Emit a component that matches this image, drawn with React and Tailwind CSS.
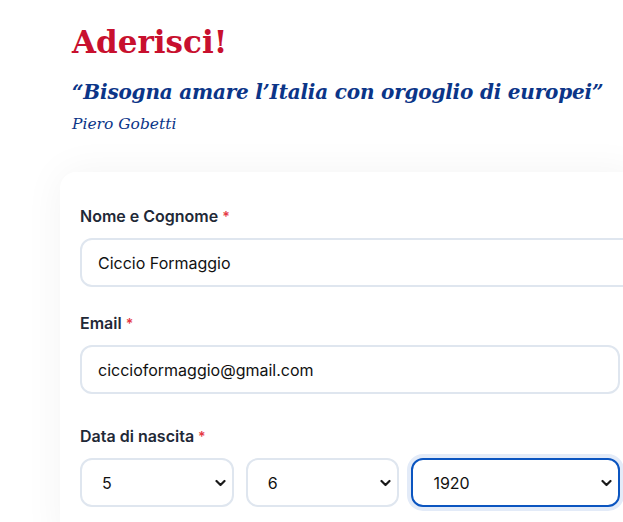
import React from "react";

function Chevron() {
  return (
    <svg className="pointer-events-none absolute right-[8px] top-1/2 -translate-y-1/2" width="11" height="7" viewBox="0 0 11 7" fill="none">
      <path d="M1.5 1.5 L5.5 5.5 L9.5 1.5" stroke="#1a1a1a" strokeWidth="2.2" strokeLinecap="round" strokeLinejoin="round" />
    </svg>
  );
}

function Sel({ value, focused, className }) {
  return (
    <div className={"relative " + (className || "")}>
      <select
        defaultValue={value}
        className={
          "h-[49px] w-full appearance-none rounded-[12px] bg-white pl-[20px] text-[16px] text-[#111] outline-none " +
          (focused
            ? "border-2 border-[#0b55c0] shadow-[0_0_0_4px_#e3ebf8]"
            : "border-2 border-[#dfe6ef]")
        }
        style={{ fontFamily: "Inter, 'Liberation Sans', sans-serif" }}
      >
        <option>{value}</option>
      </select>
      <Chevron />
    </div>
  );
}

function Label({ children }) {
  return (
    <div className="mb-[11px] text-[16px] font-semibold leading-[20px] text-[#1f2937]">
      {children} <span className="text-[14px] text-[#e53945]">*</span>
    </div>
  );
}

export default function App() {
  return (
    <div className="h-[522px] w-[623px] overflow-hidden bg-white" style={{ fontFamily: "Inter, 'Liberation Sans', sans-serif" }}>
      <div className="pl-[72px] pt-[22px]" style={{ fontFamily: "'DejaVu Serif', 'Liberation Serif', serif" }}>
        <h1 className="text-[31px] font-bold leading-[40px] text-[#c8102e]">Aderisci!</h1>
        <p className="mt-[16px] text-[20px] font-bold italic leading-[28px] tracking-[-0.2px] text-[#0b3588]">
          “Bisogna amare l’Italia con orgoglio di europei”
        </p>
        <p className="mt-[7px] text-[15.5px] italic leading-[22px] text-[#0b3588]">Piero Gobetti</p>
      </div>
      <div className="ml-[60px] mt-[37px] w-[580px] rounded-[16px] bg-white px-[20px] pt-[34px] shadow-[0_0_40px_rgba(0,0,0,0.05)]">
        <Label>Nome e Cognome</Label>
        <input
          defaultValue="Ciccio Formaggio"
          className="h-[49px] w-[600px] rounded-[12px] border-2 border-[#dfe6ef] bg-white px-[16px] text-[16px] text-[#111] outline-none"
        />
        <div className="mt-[26px]">
          <Label>Email</Label>
          <input
            defaultValue="ciccioformaggio@gmail.com"
            className="h-[49px] w-full rounded-[12px] border-2 border-[#dfe6ef] bg-white px-[16px] text-[16px] text-[#111] outline-none"
          />
        </div>
        <div className="mt-[32px]">
          <Label>Data di nascita</Label>
          <div className="flex gap-[12px]">
            <Sel value="5" className="w-[154px]" />
            <Sel value="6" className="w-[154px]" />
            <Sel value="1920" focused className="w-[209px]" />
          </div>
        </div>
        <div className="h-[40px]" />
      </div>
    </div>
  );
}
